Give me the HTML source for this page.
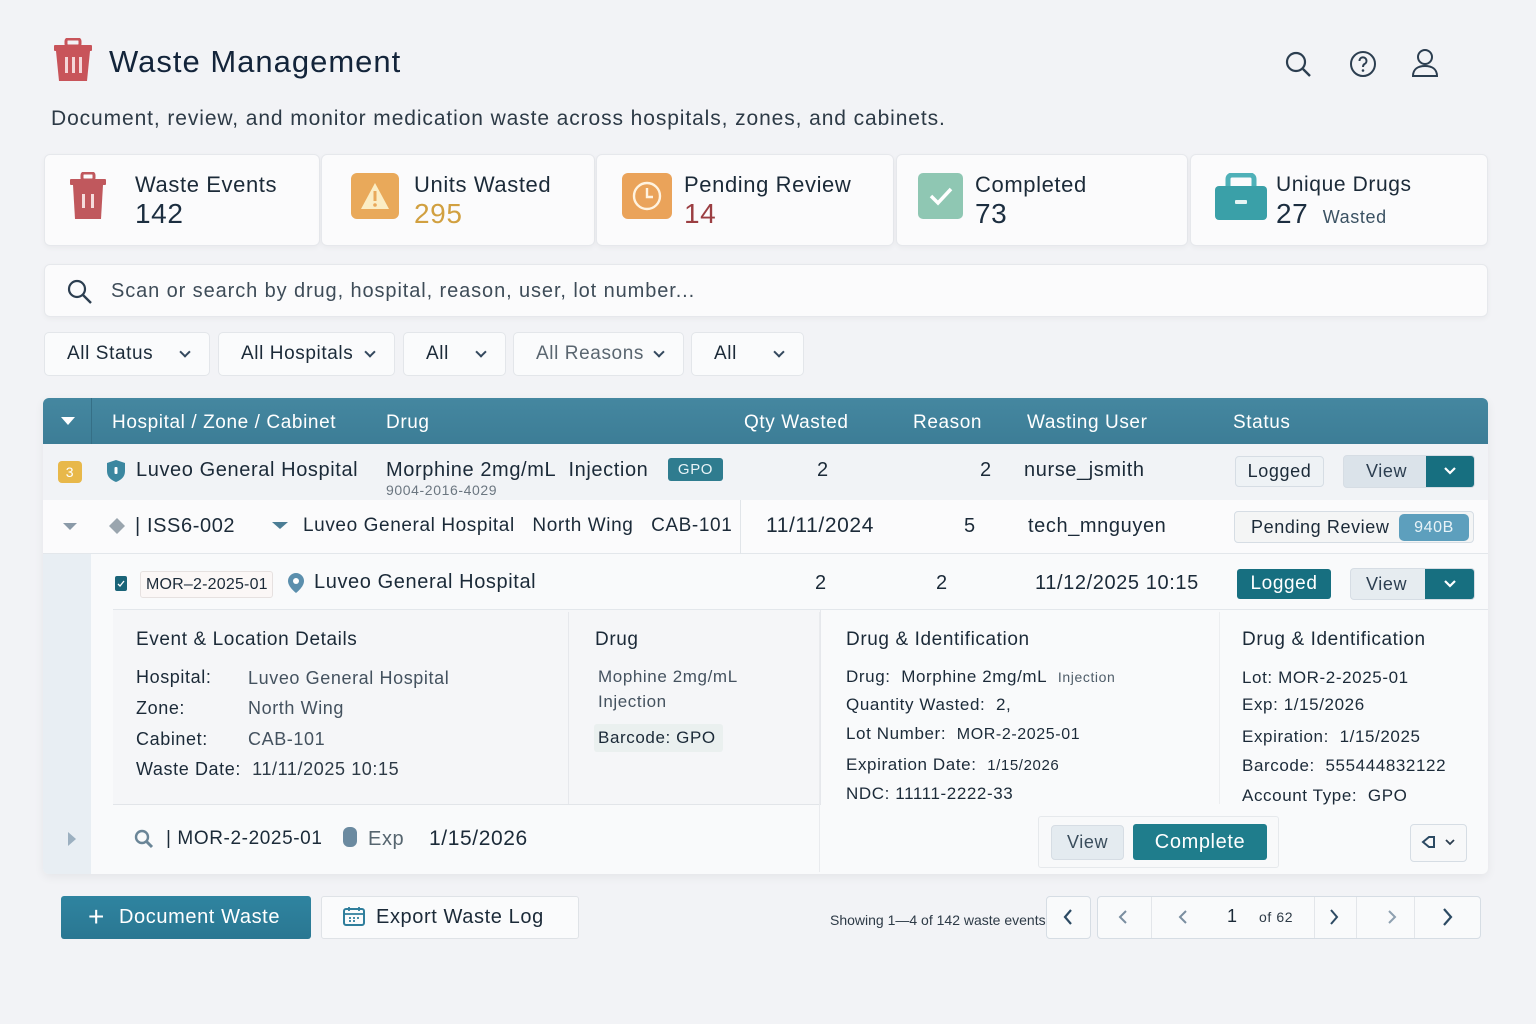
<!DOCTYPE html>
<html><head><meta charset="utf-8"><style>
*{box-sizing:border-box;margin:0;padding:0}
body{width:1536px;height:1024px;background:#f2f3f6;font-family:"Liberation Sans","DejaVu Sans",sans-serif;color:#1b2a38;position:relative;overflow:hidden;letter-spacing:0.6px}
.a{position:absolute;white-space:nowrap}
.card{position:absolute;background:#fbfbfc;border:1px solid #e6e8ec;border-radius:6px;box-shadow:0 2px 6px rgba(0,0,0,.04)}
.th{position:absolute;top:400px;height:46px;line-height:46px;color:#fff;font-size:19px}
.btn{position:absolute;border:1px solid #d6dde4;border-radius:4px;text-align:center;font-size:18px}
.dd{position:absolute;top:332px;height:44px;background:#fafbfc;border:1px solid #e3e6ea;border-radius:5px;font-size:19px;line-height:42px;padding-left:22px}
.dd:after{content:"";position:absolute;right:20px;top:15px;width:6px;height:6px;border-right:2px solid #34495e;border-bottom:2px solid #34495e;transform:rotate(45deg)}
.lbl{font-size:18px;color:#1b2a38}
.val{font-size:18px;color:#44525f}
</style></head><body>

<!-- header -->
<svg class="a" style="left:53px;top:38px" width="40" height="44" viewBox="0 0 40 44"><rect x="13" y="1" width="14" height="7" rx="2" fill="none" stroke="#c8545a" stroke-width="3"/><rect x="1" y="7" width="38" height="6" rx="1" fill="#c8545a"/><path d="M3 13h34l-3 30H6z" fill="#c8545a"/><rect x="12" y="19" width="3" height="16" fill="#f4d6d8"/><rect x="19" y="19" width="3" height="16" fill="#f4d6d8"/><rect x="26" y="19" width="3" height="16" fill="#f4d6d8"/></svg>
<div class="a" style="left:109px;top:44px;font-size:31px;font-weight:500;color:#13243a;letter-spacing:1px">Waste Management</div>
<svg class="a" style="left:1284px;top:50px" width="28" height="28" viewBox="0 0 28 28"><circle cx="12" cy="12" r="9" fill="none" stroke="#2c3e50" stroke-width="2.2"/><path d="M19 19l7 7" stroke="#2c3e50" stroke-width="2.4"/></svg>
<svg class="a" style="left:1349px;top:50px" width="28" height="28" viewBox="0 0 28 28"><circle cx="14" cy="14" r="12" fill="none" stroke="#2c3e50" stroke-width="2"/><path d="M10.5 11a3.5 3.5 0 1 1 5 3c-1.2.7-1.5 1.3-1.5 3" fill="none" stroke="#2c3e50" stroke-width="2"/><circle cx="14" cy="20.5" r="1.3" fill="#2c3e50"/></svg>
<svg class="a" style="left:1411px;top:48px" width="28" height="30" viewBox="0 0 28 30"><circle cx="14" cy="9" r="7" fill="none" stroke="#2c3e50" stroke-width="2"/><path d="M2 28c0-7 5-10 12-10s12 3 12 10z" fill="none" stroke="#2c3e50" stroke-width="2"/></svg>
<div class="a" style="left:51px;top:107px;font-size:21px;color:#2d3a46;letter-spacing:0.9px">Document, review, and monitor medication waste across hospitals, zones, and cabinets.</div>

<!-- stat cards -->
<div class="card" style="left:44px;top:154px;width:276px;height:92px"></div>
<div class="card" style="left:321px;top:154px;width:274px;height:92px"></div>
<div class="card" style="left:596px;top:154px;width:298px;height:92px"></div>
<div class="card" style="left:896px;top:154px;width:292px;height:92px"></div>
<div class="card" style="left:1190px;top:154px;width:298px;height:92px"></div>

<svg class="a" style="left:70px;top:172px" width="36" height="48" viewBox="0 0 36 48"><rect x="12" y="1" width="12" height="7" rx="2" fill="none" stroke="#c0585d" stroke-width="3"/><rect x="0" y="7" width="36" height="6" rx="1" fill="#c0585d"/><path d="M3 13h30l-2 34H5z" fill="#c0585d"/><rect x="12" y="22" width="3" height="14" fill="#f5dcdc"/><rect x="21" y="22" width="3" height="14" fill="#f5dcdc"/></svg>
<div class="a" style="left:135px;top:172px;font-size:22px">Waste Events</div>
<div class="a" style="left:135px;top:198px;font-size:28px;color:#1c2e40">142</div>

<div class="a" style="left:351px;top:173px;width:48px;height:46px;background:#e9a95a;border-radius:6px"></div>
<svg class="a" style="left:359px;top:181px" width="32" height="30" viewBox="0 0 32 30"><path d="M16 2L30 28H2z" fill="#fbedc4"/><rect x="14.5" y="10" width="3" height="10" fill="#e9a95a"/><circle cx="16" cy="24" r="1.8" fill="#e9a95a"/></svg>
<div class="a" style="left:414px;top:172px;font-size:22px">Units Wasted</div>
<div class="a" style="left:414px;top:198px;font-size:28px;color:#d1a040">295</div>

<div class="a" style="left:622px;top:173px;width:50px;height:46px;background:#eaa35a;border-radius:6px"></div>
<svg class="a" style="left:630px;top:179px" width="34" height="34" viewBox="0 0 34 34"><circle cx="17" cy="17" r="13" fill="none" stroke="#fff3e0" stroke-width="2.4"/><path d="M17 9v9h6" fill="none" stroke="#fff3e0" stroke-width="2.4"/></svg>
<div class="a" style="left:684px;top:172px;font-size:22px">Pending Review</div>
<div class="a" style="left:684px;top:198px;font-size:28px;color:#9b3e42">14</div>

<div class="a" style="left:918px;top:173px;width:45px;height:46px;background:#8fc7b3;border-radius:5px"></div>
<svg class="a" style="left:926px;top:183px" width="30" height="26" viewBox="0 0 30 26"><path d="M5 13l7 7L25 6" fill="none" stroke="#fff" stroke-width="3.5"/></svg>
<div class="a" style="left:975px;top:172px;font-size:22px">Completed</div>
<div class="a" style="left:975px;top:198px;font-size:28px;color:#1c2e40">73</div>

<svg class="a" style="left:1214px;top:173px" width="54" height="48" viewBox="0 0 54 48"><path d="M14 14V6a4 4 0 0 1 4-4h18a4 4 0 0 1 4 4v8" fill="none" stroke="#4fb1b8" stroke-width="5"/><rect x="1" y="13" width="52" height="34" rx="4" fill="#3aa0a8"/><rect x="21" y="27" width="12" height="4" rx="1" fill="#e6f5f5"/></svg>
<div class="a" style="left:1276px;top:173px;font-size:21px">Unique Drugs</div>
<div class="a" style="left:1276px;top:198px;font-size:28px;color:#1c2e40">27 <span style="font-size:18px;color:#3b5263;margin-left:6px">Wasted</span></div>

<!-- search -->
<div class="card" style="left:44px;top:264px;width:1444px;height:53px"></div>
<svg class="a" style="left:66px;top:278px" width="28" height="28" viewBox="0 0 28 28"><circle cx="11" cy="11" r="8" fill="none" stroke="#2c3e50" stroke-width="2.2"/><path d="M17 17l8 8" stroke="#2c3e50" stroke-width="2.4"/></svg>
<div class="a" style="left:111px;top:280px;font-size:20px;color:#3e4c58;letter-spacing:0.9px">Scan or search by drug, hospital, reason, user, lot number...</div>

<!-- dropdowns -->
<div class="dd" style="left:44px;width:166px">All Status</div>
<div class="dd" style="left:218px;width:177px">All Hospitals</div>
<div class="dd" style="left:403px;width:103px">All</div>
<div class="dd" style="left:513px;width:171px;color:#5a6670">All Reasons</div>
<div class="dd" style="left:691px;width:113px">All</div>

<!-- table -->
<div class="a" style="left:43px;top:398px;width:1445px;height:476px;background:#f9fafb;border-radius:6px;box-shadow:0 3px 10px rgba(0,0,0,.06);overflow:hidden">
 <div class="a" style="left:0;top:0;width:1445px;height:46px;background:linear-gradient(#4587a0,#3c7d96)"></div>
 <div class="a" style="left:48px;top:0;width:1px;height:46px;background:#356f86"></div>
 <div class="a" style="left:0;top:46px;width:1445px;height:56px;background:#f1f3f6"></div>
 <div class="a" style="left:0;top:102px;width:1445px;height:54px;background:#fbfbfc;border-bottom:1px solid #e3e7eb"></div>
 <div class="a" style="left:0;top:156px;width:48px;height:320px;background:#e8eef3"></div>
 <div class="a" style="left:70px;top:212px;width:708px;height:195px;background:#f5f6f8;border-right:1px solid #e6e8ec;border-bottom:1px solid #e2e5e9"></div>
 <div class="a" style="left:70px;top:211px;width:1375px;height:1px;background:#e3e7eb"></div>
</div>
<svg class="a" style="left:61px;top:417px" width="14" height="9"><path d="M0 0h14L7 8z" fill="#fff"/></svg>
<div class="th" style="left:112px">Hospital / Zone / Cabinet</div>
<div class="th" style="left:386px">Drug</div>
<div class="th" style="left:744px">Qty Wasted</div>
<div class="th" style="left:913px">Reason</div>
<div class="th" style="left:1027px">Wasting User</div>
<div class="th" style="left:1233px">Status</div>

<!-- row 1 -->
<div class="a" style="left:58px;top:461px;width:24px;height:22px;background:#e8b84a;border-radius:4px;color:#fff;font-size:14px;text-align:center;line-height:22px">3</div>
<svg class="a" style="left:106px;top:459px" width="20" height="24" viewBox="0 0 20 24"><path d="M10 1l9 3v8c0 6-4 9-9 11-5-2-9-5-9-11V4z" fill="#3b87a0"/><rect x="8.5" y="8" width="3" height="7" rx="1" fill="#fff"/></svg>
<div class="a" style="left:136px;top:459px;font-size:20px">Luveo General Hospital</div>
<div class="a" style="left:386px;top:459px;font-size:20px">Morphine 2mg/mL&nbsp; Injection</div>
<div class="a" style="left:386px;top:482px;font-size:14px;color:#6b7680">9004-2016-4029</div>
<div class="a" style="left:668px;top:458px;width:55px;height:23px;background:#2f7c8f;border-radius:3px;color:#e8f4f7;font-size:15px;text-align:center;line-height:23px">GPO</div>
<div class="a" style="left:817px;top:459px;font-size:20px">2</div>
<div class="a" style="left:980px;top:459px;font-size:20px">2</div>
<div class="a" style="left:1024px;top:459px;font-size:20px">nurse_jsmith</div>
<div class="btn" style="left:1235px;top:456px;width:89px;height:31px;line-height:29px;background:#eef2f5">Logged</div>
<div class="btn" style="left:1343px;top:455px;width:132px;height:33px;background:#dbe3ea;overflow:hidden;line-height:31px;text-align:left;padding-left:22px;color:#2c3e50">View<div class="a" style="left:82px;top:0;width:50px;height:33px;background:#176f80"></div></div>
<svg class="a" style="left:1443px;top:466px" width="14" height="10"><path d="M2 2l5 5 5-5" fill="none" stroke="#fff" stroke-width="2.2"/></svg>

<!-- row 2 -->
<svg class="a" style="left:63px;top:523px" width="14" height="8"><path d="M0 0h14L7 7z" fill="#8a9aa8"/></svg>
<svg class="a" style="left:108px;top:517px" width="18" height="18"><path d="M9 1l8 8-8 8-8-8z" fill="#9aa5ae"/></svg>
<div class="a" style="left:135px;top:515px;font-size:20px">| ISS6-002</div>
<svg class="a" style="left:272px;top:522px" width="16" height="8"><path d="M0 0h16L8 7z" fill="#4b7d95"/></svg>
<div class="a" style="left:303px;top:515px;font-size:19px">Luveo General Hospital&nbsp;&nbsp; North Wing&nbsp;&nbsp; CAB-101</div>
<div class="a" style="left:740px;top:500px;width:1px;height:54px;background:#e1e5e9"></div>
<div class="a" style="left:766px;top:514px;font-size:21px">11/11/2024</div>
<div class="a" style="left:964px;top:515px;font-size:20px">5</div>
<div class="a" style="left:1028px;top:515px;font-size:20px">tech_mnguyen</div>
<div class="btn" style="left:1234px;top:511px;width:240px;height:32px;background:#f4f5f5;text-align:left;padding-left:16px;line-height:30px">Pending Review</div>
<div class="a" style="left:1399px;top:514px;width:70px;height:27px;background:#5d9fbd;border-radius:5px;color:#e8f3f8;font-size:16px;text-align:center;line-height:27px">940B</div>

<!-- row 3 -->
<div class="a" style="left:115px;top:576px;width:12px;height:15px;background:#1a6478;border-radius:2px"></div>
<svg class="a" style="left:116px;top:579px" width="10" height="10"><path d="M2 5l2 2 4-5" fill="none" stroke="#fff" stroke-width="1.3"/></svg>
<div class="a" style="left:140px;top:571px;width:133px;height:27px;background:#fbf7f6;border:1px solid #e6e1e0;border-radius:3px;font-size:16px;line-height:25px;padding-left:5px;letter-spacing:0.2px">MOR–2-2025-01</div>
<svg class="a" style="left:287px;top:572px" width="18" height="22" viewBox="0 0 18 22"><path d="M9 1a8 8 0 0 1 8 8c0 6-8 12-8 12S1 15 1 9a8 8 0 0 1 8-8z" fill="#5b8fad"/><circle cx="9" cy="9" r="3" fill="#fff"/></svg>
<div class="a" style="left:314px;top:571px;font-size:20px">Luveo General Hospital</div>
<div class="a" style="left:815px;top:572px;font-size:20px">2</div>
<div class="a" style="left:936px;top:572px;font-size:20px">2</div>
<div class="a" style="left:1035px;top:572px;font-size:20px">11/12/2025 10:15</div>
<div class="a" style="left:1237px;top:569px;width:94px;height:30px;background:#176f80;border-radius:3px;color:#fff;font-size:19px;text-align:center;line-height:30px">Logged</div>
<div class="btn" style="left:1350px;top:568px;width:125px;height:32px;background:#e6ecf0;overflow:hidden;line-height:30px;text-align:left;padding-left:15px;color:#2c3e50">View<div class="a" style="left:74px;top:0;width:51px;height:32px;background:#176f80"></div></div>
<svg class="a" style="left:1443px;top:579px" width="14" height="10"><path d="M2 2l5 5 5-5" fill="none" stroke="#fff" stroke-width="2.2"/></svg>

<!-- details -->
<div class="a" style="left:136px;top:629px;font-size:19px">Event &amp; Location Details</div>
<div class="a lbl" style="left:136px;top:667px">Hospital:</div><div class="a val" style="left:248px;top:668px">Luveo General Hospital</div>
<div class="a lbl" style="left:136px;top:698px">Zone:</div><div class="a val" style="left:248px;top:698px">North Wing</div>
<div class="a lbl" style="left:136px;top:729px">Cabinet:</div><div class="a val" style="left:248px;top:729px">CAB-101</div>
<div class="a lbl" style="left:136px;top:759px">Waste Date:&nbsp; <span style="color:#2d3a46">11/11/2025 10:15</span></div>
<div class="a" style="left:568px;top:612px;width:1px;height:192px;background:#e6e8ec"></div>
<div class="a" style="left:595px;top:629px;font-size:19px">Drug</div>
<div class="a val" style="left:598px;top:667px;font-size:17px">Mophine 2mg/mL</div>
<div class="a val" style="left:598px;top:692px;font-size:17px">Injection</div>
<div class="a" style="left:594px;top:724px;width:129px;height:28px;background:#eaf0ef;border-radius:3px;font-size:17px;line-height:28px;padding-left:4px">Barcode: GPO</div>

<div class="a" style="left:819px;top:612px;width:1px;height:260px;background:#e9ebee"></div>
<div class="a" style="left:846px;top:629px;font-size:19px">Drug &amp; Identification</div>
<div class="a lbl" style="left:846px;top:667px;font-size:17px">Drug:&nbsp; Morphine 2mg/mL&nbsp; <span style="font-size:14px;color:#4f5d69">Injection</span></div>
<div class="a lbl" style="left:846px;top:695px;font-size:17px">Quantity Wasted:&nbsp; 2,</div>
<div class="a lbl" style="left:846px;top:724px;font-size:17px">Lot Number:&nbsp; <span style="font-size:16px">MOR-2-2025-01</span></div>
<div class="a lbl" style="left:846px;top:755px;font-size:17px">Expiration Date:&nbsp; <span style="font-size:15px">1/15/2026</span></div>
<div class="a lbl" style="left:846px;top:784px;font-size:17px">NDC: 11111-2222-33</div>

<div class="a" style="left:1219px;top:612px;width:1px;height:192px;background:#eceef0"></div>
<div class="a" style="left:1242px;top:629px;font-size:19px">Drug &amp; Identification</div>
<div class="a lbl" style="left:1242px;top:668px;font-size:17px">Lot: MOR-2-2025-01</div>
<div class="a lbl" style="left:1242px;top:695px;font-size:17px">Exp: 1/15/2026</div>
<div class="a lbl" style="left:1242px;top:727px;font-size:17px">Expiration:&nbsp; 1/15/2025</div>
<div class="a lbl" style="left:1242px;top:756px;font-size:17px">Barcode:&nbsp; 555444832122</div>
<div class="a lbl" style="left:1242px;top:786px;font-size:17px">Account Type:&nbsp; GPO</div>

<!-- bottom row of expanded -->
<svg class="a" style="left:66px;top:831px" width="12" height="16"><path d="M2 1l8 7-8 7z" fill="#9cb0c0"/></svg>
<svg class="a" style="left:133px;top:828px" width="22" height="22" viewBox="0 0 22 22"><circle cx="9" cy="9" r="6" fill="none" stroke="#6a8597" stroke-width="2.4"/><path d="M13 13l6 6" stroke="#6a8597" stroke-width="3"/></svg>
<div class="a" style="left:166px;top:828px;font-size:19px">| MOR-2-2025-01</div>
<div class="a" style="left:343px;top:827px;width:14px;height:20px;background:#6b8aa0;border-radius:6px"></div>
<div class="a" style="left:368px;top:828px;font-size:20px;color:#56656f">Exp</div>
<div class="a" style="left:429px;top:827px;font-size:21px">1/15/2026</div>
<div class="a" style="left:1038px;top:816px;width:241px;height:52px;border:1px solid #e6e9ec;border-radius:3px;background:#f8f9fa"></div>
<div class="btn" style="left:1051px;top:825px;width:73px;height:35px;line-height:33px;background:#e4ebf0;color:#3a4d5c">View</div>
<div class="a" style="left:1133px;top:824px;width:134px;height:36px;background:#1f7d8c;border-radius:3px;color:#fff;font-size:20px;text-align:center;line-height:36px">Complete</div>
<div class="btn" style="left:1410px;top:824px;width:57px;height:38px;background:#f7f8f9"></div>
<svg class="a" style="left:1421px;top:834px" width="36" height="18"><path d="M2 8l6-5h5v10H8z" fill="none" stroke="#2c4a63" stroke-width="2"/><path d="M25 6l4 4 4-4" fill="none" stroke="#2c3e50" stroke-width="1.8"/></svg>

<!-- footer -->
<div class="a" style="left:61px;top:896px;width:250px;height:43px;background:linear-gradient(#2f84a0,#2a7792);border-radius:3px;color:#fff;font-size:20px;line-height:43px;padding-left:58px">Document Waste</div>
<div class="a" style="left:88px;top:903px;color:#fff;font-size:28px;line-height:28px">+</div>
<div class="a" style="left:321px;top:896px;width:258px;height:43px;background:#fafbfc;border:1px solid #dfe3e7;border-radius:3px;font-size:20px;line-height:41px;padding-left:54px">Export Waste Log</div>
<svg class="a" style="left:343px;top:906px" width="22" height="20" viewBox="0 0 22 20"><rect x="1" y="3" width="20" height="16" rx="2" fill="none" stroke="#2f7e9c" stroke-width="2"/><path d="M1 8h20M6 1v4M16 1v4M6 12h2M10 12h2M14 12h2M6 15h2M10 15h2" stroke="#2f7e9c" stroke-width="1.8"/></svg>
<div class="a" style="left:830px;top:912px;font-size:14px;color:#2d3a46;letter-spacing:0">Showing 1—4 of 142 waste events</div>
<div class="btn" style="left:1046px;top:896px;width:45px;height:43px;background:#f9fafb"></div>
<div class="btn" style="left:1097px;top:896px;width:384px;height:43px;background:#f9fafb"></div>
<div class="a" style="left:1151px;top:897px;width:1px;height:41px;background:#e3e6ea"></div>
<div class="a" style="left:1314px;top:897px;width:1px;height:41px;background:#e3e6ea"></div>
<div class="a" style="left:1356px;top:897px;width:1px;height:41px;background:#e3e6ea"></div>
<div class="a" style="left:1414px;top:897px;width:1px;height:41px;background:#e3e6ea"></div>
<svg class="a" style="left:1062px;top:908px" width="12" height="18"><path d="M9 2L3 9l6 7" fill="none" stroke="#2c4a63" stroke-width="2.2"/></svg>
<svg class="a" style="left:1117px;top:909px" width="12" height="16"><path d="M9 2L3 8l6 6" fill="none" stroke="#7a8ea0" stroke-width="2"/></svg>
<svg class="a" style="left:1177px;top:909px" width="12" height="16"><path d="M9 2L3 8l6 6" fill="none" stroke="#7a8ea0" stroke-width="2"/></svg>
<div class="a" style="left:1227px;top:906px;font-size:18px">1</div>
<div class="a" style="left:1259px;top:909px;font-size:14px;color:#2d3a46">of 62</div>
<svg class="a" style="left:1328px;top:908px" width="12" height="18"><path d="M3 2l6 7-6 7" fill="none" stroke="#2c4a63" stroke-width="2"/></svg>
<svg class="a" style="left:1386px;top:909px" width="12" height="16"><path d="M3 2l6 6-6 6" fill="none" stroke="#8ea0b0" stroke-width="2"/></svg>
<svg class="a" style="left:1441px;top:907px" width="14" height="20"><path d="M3 2l7 8-7 8" fill="none" stroke="#2c4a63" stroke-width="2.2"/></svg>

</body></html>
